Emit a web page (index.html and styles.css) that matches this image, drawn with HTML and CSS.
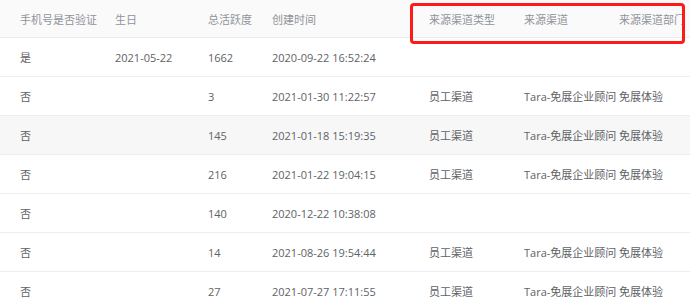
FILE: index.html
```html
<!DOCTYPE html>
<html lang="zh">
<head>
<meta charset="utf-8">
<link rel="stylesheet" href="styles.css">
</head>
<body>
<div class="wrap">
  <table class="grid">
    <colgroup>
      <col class="c1"><col class="c2"><col class="c3"><col class="c4"><col class="c5"><col class="c6"><col class="c7">
    </colgroup>
    <thead>
      <tr><th class="first">手机号是否验证</th><th>生日</th><th>总活跃度</th><th>创建时间</th><th>来源渠道类型</th><th>来源渠道</th><th>来源渠道部门</th></tr>
    </thead>
    <tbody>
      <tr><td class="first">是</td><td>2021-05-22</td><td>1662</td><td>2020-09-22 16:52:24</td><td></td><td></td><td></td></tr>
      <tr><td class="first">否</td><td></td><td>3</td><td>2021-01-30 11:22:57</td><td>员工渠道</td><td>Tara-免展企业顾问</td><td>免展体验</td></tr>
      <tr class="hover"><td class="first">否</td><td></td><td>145</td><td>2021-01-18 15:19:35</td><td>员工渠道</td><td>Tara-免展企业顾问</td><td>免展体验</td></tr>
      <tr><td class="first">否</td><td></td><td>216</td><td>2021-01-22 19:04:15</td><td>员工渠道</td><td>Tara-免展企业顾问</td><td>免展体验</td></tr>
      <tr><td class="first">否</td><td></td><td>140</td><td>2020-12-22 10:38:08</td><td></td><td></td><td></td></tr>
      <tr><td class="first">否</td><td></td><td>14</td><td>2021-08-26 19:54:44</td><td>员工渠道</td><td>Tara-免展企业顾问</td><td>免展体验</td></tr>
      <tr><td class="first">否</td><td></td><td>27</td><td>2021-07-27 17:11:55</td><td>员工渠道</td><td>Tara-免展企业顾问</td><td>免展体验</td></tr>
    </tbody>
  </table>
  <div class="mark"></div>
</div>
</body>
</html>
```

FILE: styles.css
```css
html, body {
  margin: 0;
  padding: 0;
  background: #fff;
}
.wrap {
  position: relative;
  width: 690px;
  height: 303px;
  overflow: hidden;
}
.grid {
  border-collapse: collapse;
  table-layout: fixed;
  width: 720px;
  font-family: "Open Sans", "Noto Sans CJK SC", sans-serif;
  font-size: 11px;
}
.c1 { width: 105px; }
.c2 { width: 93px; }
.c3 { width: 64px; }
.c4 { width: 157px; }
.c5 { width: 95px; }
.c6 { width: 95px; }
.c7 { width: 111px; }
th, td {
  padding: 0 0 0 10px;
  text-align: left;
  white-space: nowrap;
  overflow: visible;
  border-bottom: 1px solid #ebeef5;
}
th {
  height: 37px;
  background: #fafafa;
  color: #909399;
  font-weight: normal;
  overflow: hidden;
}
td {
  height: 38px;
  color: #606266;
}
.narrow {
  letter-spacing: -0.2px;
}
th.first, td.first {
  padding-left: 20px;
}
tr.hover td {
  background: #f7f7f7;
}
.mark {
  position: absolute;
  left: 410px;
  top: 3px;
  width: 269px;
  height: 35px;
  border: 3px solid #ff1a1a;
  border-radius: 4px;
}
```
